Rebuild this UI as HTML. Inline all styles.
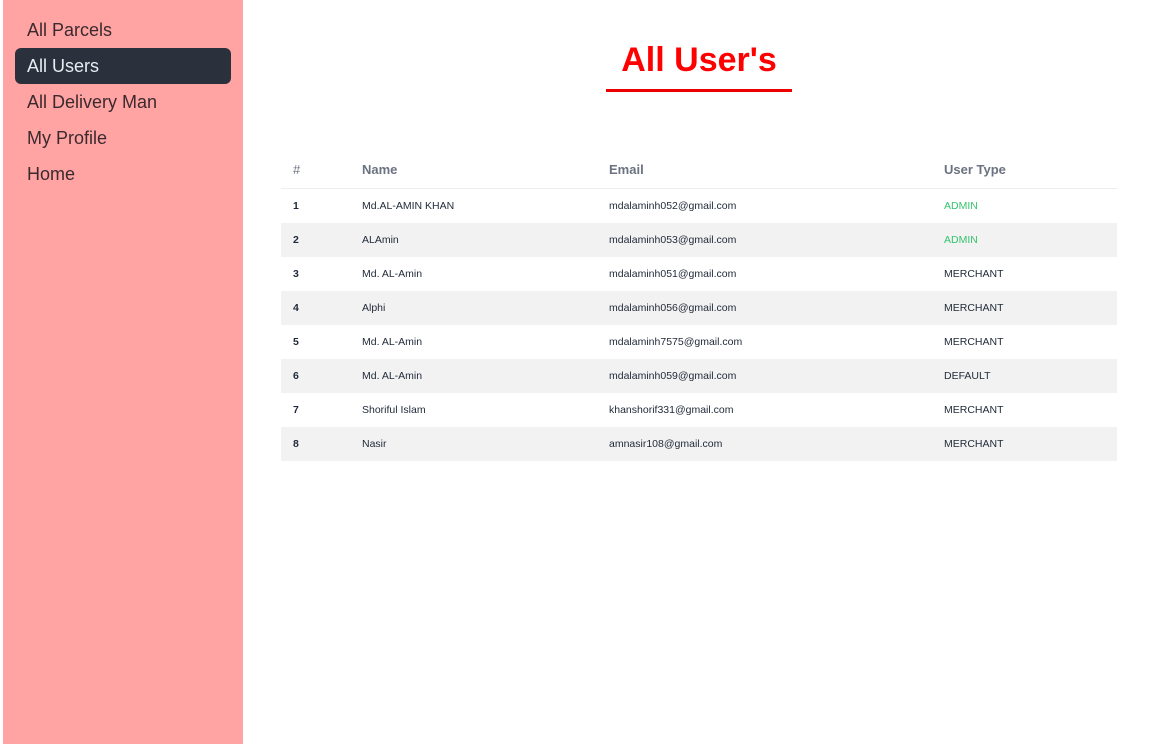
<!DOCTYPE html>
<html><head><style>
body{margin:0;width:1154px;height:744px;background:#fff;font-family:"Liberation Sans",sans-serif;position:relative;overflow:hidden}
.side{position:absolute;left:3px;top:0;width:240px;height:744px;background:#ffa3a3}
.nav{position:absolute;left:12px;width:216px;height:36px;line-height:36px;font-size:18px;color:#3a2a2e;padding-left:12px;box-sizing:border-box}
.act{background:#2a303c;color:#e8ecf2;border-radius:6px}
h1{position:absolute;left:606px;width:186px;top:38px;margin:0;text-align:center;color:#f00;font-size:34px;font-weight:bold;line-height:44px}
.ul{position:absolute;left:606px;top:89px;width:186px;height:3px;background:#e00}
table{position:absolute;left:281px;top:150px;width:836px;border-collapse:collapse;font-size:10.5px;color:#1f2937}
th{height:38px;text-align:left;color:#6b7280;font-size:13px;font-weight:bold;border-bottom:1px solid #eee;padding:0}
td{height:34px;padding:0}
tr:nth-child(even) td{background:#f2f2f2}
.g{color:#36c46e}
</style></head><body>
<div class="side">
<div class="nav" style="top:12px">All Parcels</div>
<div class="nav act" style="top:48px">All Users</div>
<div class="nav" style="top:84px">All Delivery Man</div>
<div class="nav" style="top:120px">My Profile</div>
<div class="nav" style="top:156px">Home</div>
</div>
<h1>All User's</h1><div class="ul"></div>
<table>
<thead><tr><th style="padding-left:12px;width:69px;font-weight:normal">#</th><th style="width:247px">Name</th><th style="width:335px">Email</th><th>User Type</th></tr></thead>
<tbody>
<tr><td style="padding-left:12px"><b>1</b></td><td>Md.AL-AMIN KHAN</td><td>mdalaminh052@gmail.com</td><td class="g">ADMIN</td></tr>
<tr><td style="padding-left:12px"><b>2</b></td><td>ALAmin</td><td>mdalaminh053@gmail.com</td><td class="g">ADMIN</td></tr>
<tr><td style="padding-left:12px"><b>3</b></td><td>Md. AL-Amin</td><td>mdalaminh051@gmail.com</td><td>MERCHANT</td></tr>
<tr><td style="padding-left:12px"><b>4</b></td><td>Alphi</td><td>mdalaminh056@gmail.com</td><td>MERCHANT</td></tr>
<tr><td style="padding-left:12px"><b>5</b></td><td>Md. AL-Amin</td><td>mdalaminh7575@gmail.com</td><td>MERCHANT</td></tr>
<tr><td style="padding-left:12px"><b>6</b></td><td>Md. AL-Amin</td><td>mdalaminh059@gmail.com</td><td>DEFAULT</td></tr>
<tr><td style="padding-left:12px"><b>7</b></td><td>Shoriful Islam</td><td>khanshorif331@gmail.com</td><td>MERCHANT</td></tr>
<tr><td style="padding-left:12px"><b>8</b></td><td>Nasir</td><td>amnasir108@gmail.com</td><td>MERCHANT</td></tr>
</tbody></table>
</body></html>
